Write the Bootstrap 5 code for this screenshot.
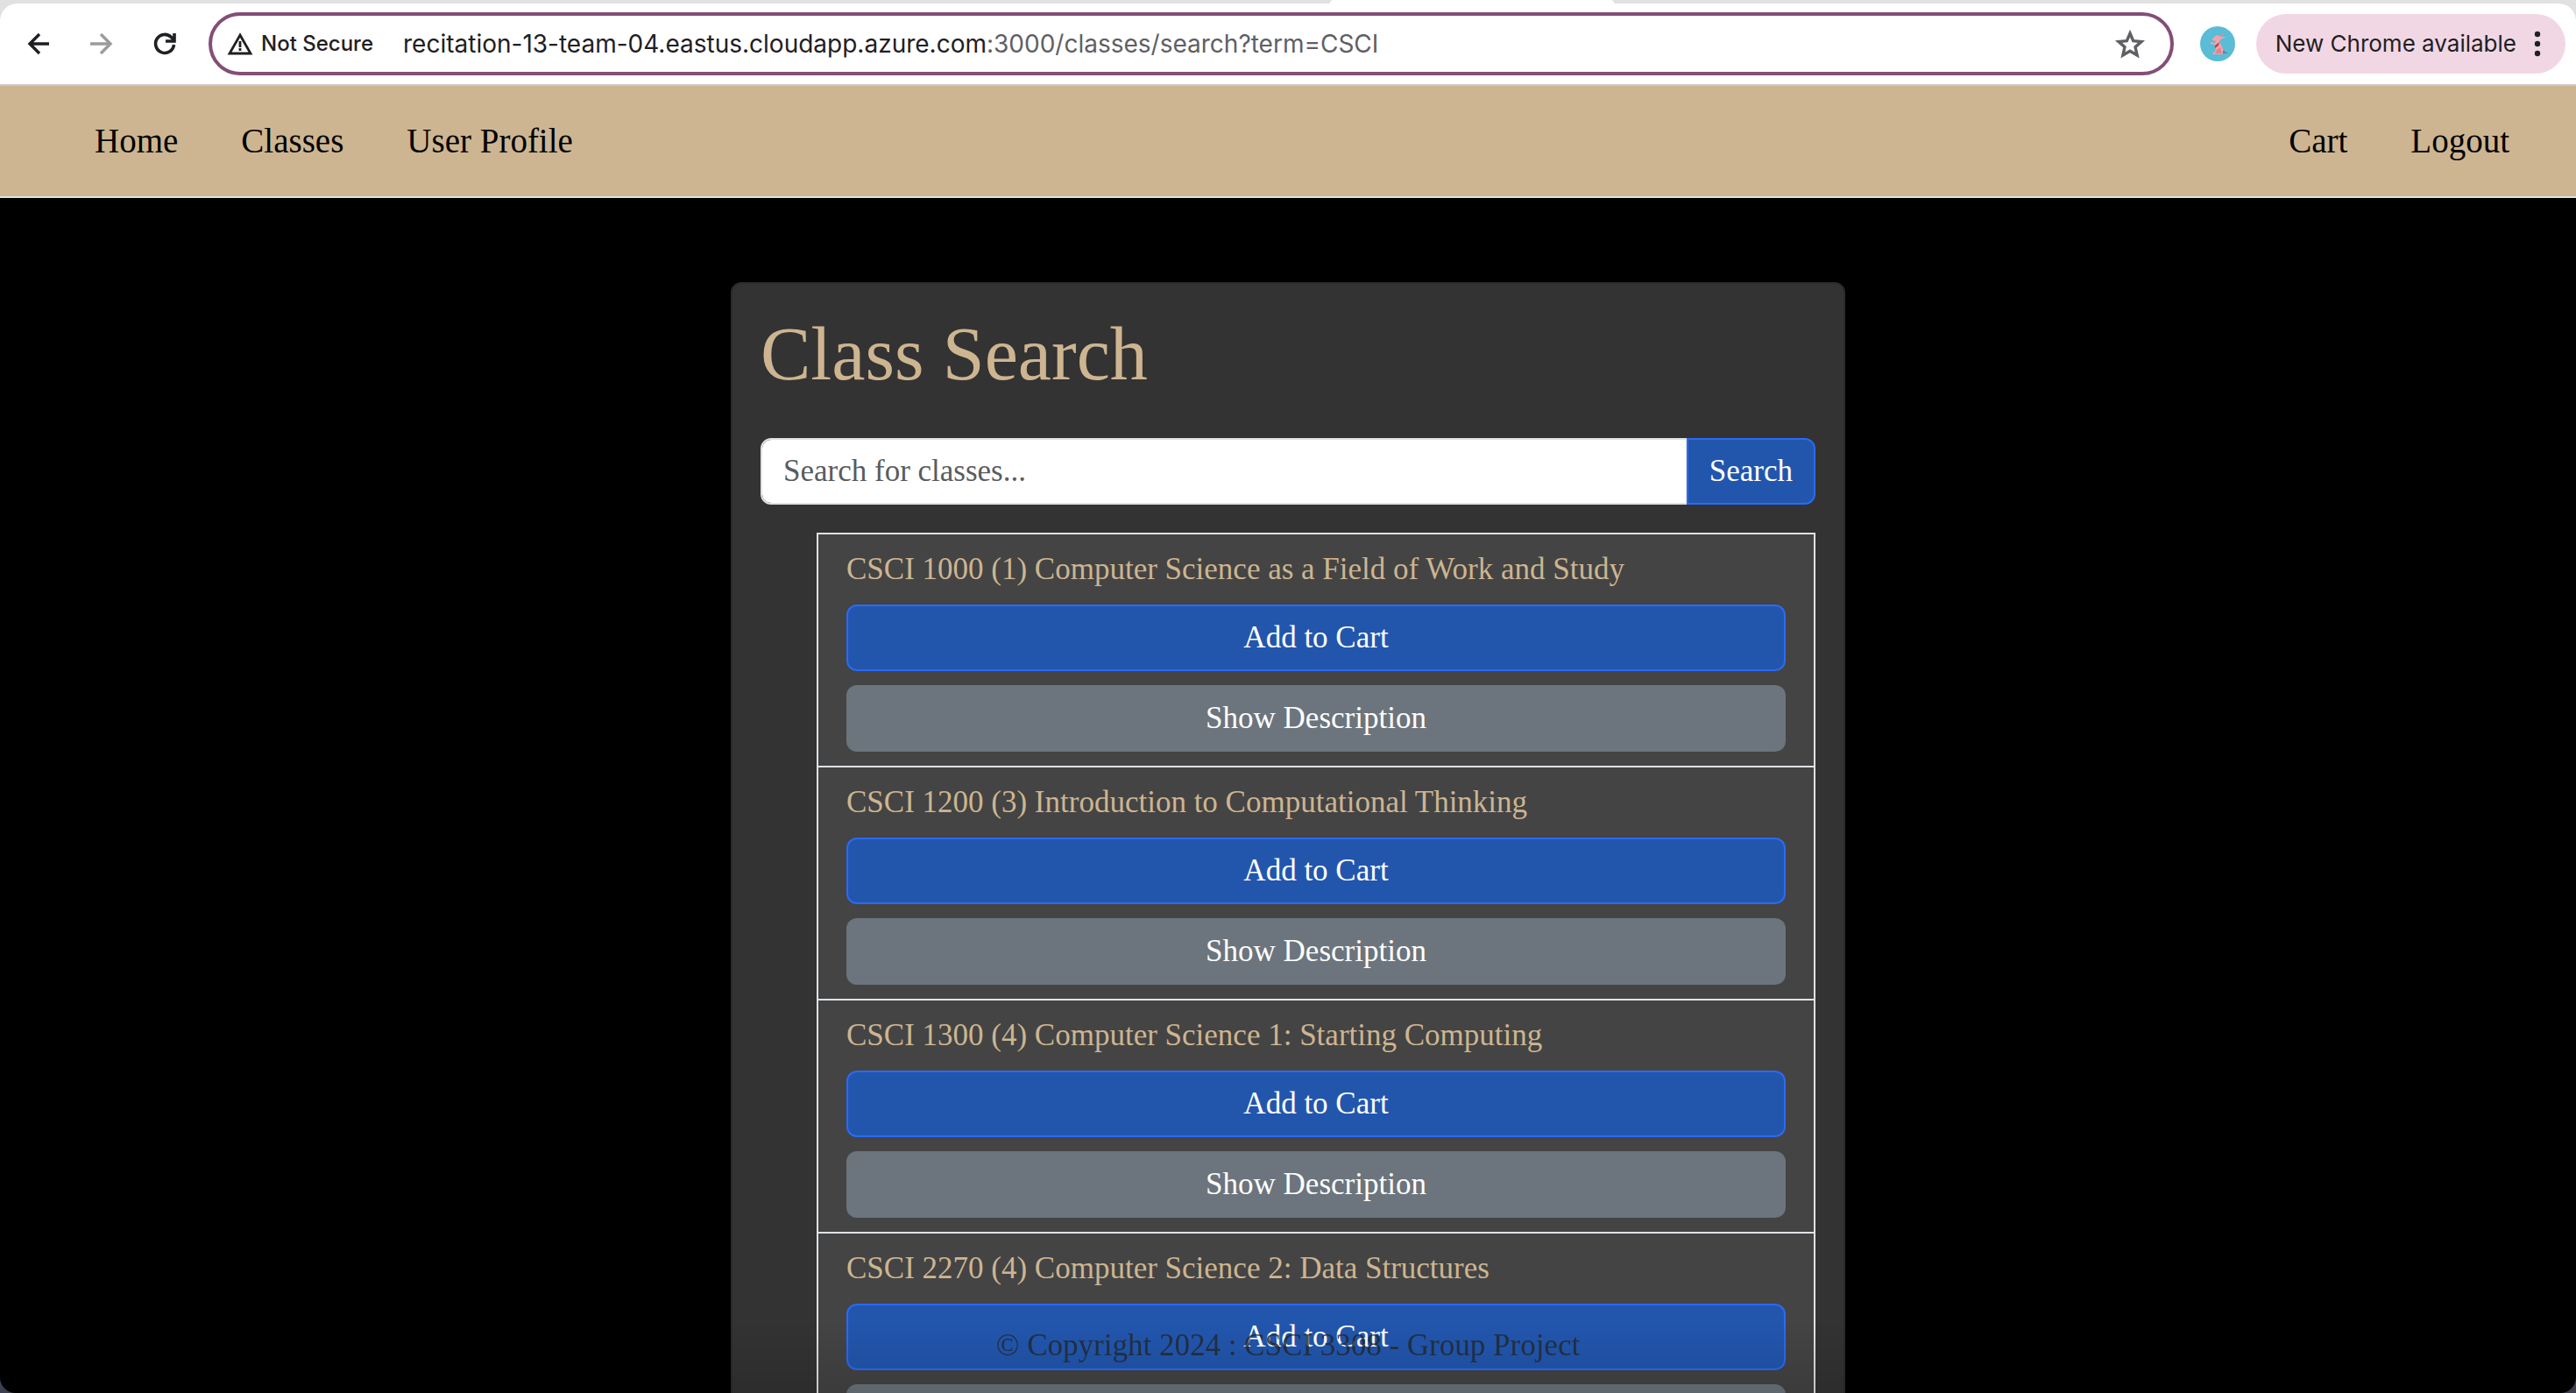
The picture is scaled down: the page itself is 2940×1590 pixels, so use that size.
<!DOCTYPE html>
<html lang="en">
<head>
<meta charset="utf-8">
<meta name="viewport" content="width=device-width, initial-scale=1">
<title>Class Search</title>
<link href="https://cdn.jsdelivr.net/npm/bootstrap@5.3.0/dist/css/bootstrap.min.css" rel="stylesheet">
<style>
html { font-size: 32px; background: #45485a; }
body { background: #000; font-family: Georgia, "Liberation Serif", serif; font-size: 35px; line-height: 48px; height: 100vh; overflow: hidden; border-radius: 0 0 18px 18px; }

/* browser toolbar */
.chrome-top { background: #e1e1e1; padding-top: 4px; font-family: Inter, sans-serif; }
.chrome-bar { background: #fff; height: 94px; border-bottom: 2px solid #c8cccf; border-radius: 20px 20px 0 0; padding: 0 12px 0 24px; position: relative; }
.tab-foot { position: absolute; left: 1518px; top: -4px; width: 324px; height: 4px; background: #fff; border-radius: 10px 10px 0 0; }
.icon-btn { border: 0; background: none; padding: 0; line-height: 0; }
.chrome-nav { gap: 32px; width: 214px; }
.omnibox { height: 72px; border: 4px solid #834e77; border-radius: 36px; padding: 0 28px 0 17px; color: #1f2023; }
.site-state { font-size: 24px; font-weight: 500; gap: 9px; margin-right: 34px; }
.site-url { font-size: 28px; }
.site-url span { color: #5f6064; }
.avatar-btn { margin: 0 24px 0 30px; }
.update-pill { height: 68px; border: 0; border-radius: 34px; background: #f1d7e4; color: #1f2023; font-size: 26px; padding: 0 28px 0 22px; gap: 20px; }

/* site navigation */
.site-nav { background: #cdb591; border-bottom: 2px solid #dee2e6; height: 128px; padding: 0 76px 0 108px; font-size: 39px; }
.site-nav .navbar-nav { gap: 72px; }
.site-nav .nav-link { color: #000; padding: 0; }

/* search card */
.search-card { width: 1272px; margin-top: 96px; background: #333; border: 2px solid #2b2b2b; border-radius: 12px; }
.search-card .card-body { padding: 32px; }
.search-title { font-size: 86px; line-height: 96px; color: #cdb591; margin-bottom: 48px; }
.form-control, .btn { font-size: 35px; line-height: 48px; height: 76px; border-width: 2px; border-radius: 12px; padding: 0 24px; font-family: inherit; }
.form-control::placeholder { color: #595c5f; }
.btn-add { --bs-btn-color: #fff; --bs-btn-bg: #2256ad; --bs-btn-border-color: #2b6af3; --bs-btn-hover-color: #fff; --bs-btn-hover-bg: #1b478f; }
.class-list { margin: 32px 0 0 64px; padding: 0; border-radius: 0; }
.class-list .list-group-item { background: #444; color: #cdb591; border: 2px solid #dee2e6; padding: 16px 32px; gap: 16px; }
.class-list .list-group-item + .list-group-item { border-top-width: 0; }

/* pinned footer, over the list */
.site-footer { height: 78px; color: rgba(33, 37, 41, .8); pointer-events: none; background: linear-gradient(rgba(0, 0, 0, 0), rgba(0, 0, 0, .12)); }
</style>
</head>
<body>
<header class="chrome-top">
  <div class="chrome-bar d-flex align-items-center">
    <div class="tab-foot"></div>
    <div class="chrome-nav d-flex align-items-center flex-shrink-0">
      <button class="icon-btn" type="button" aria-label="Back"><svg width="40" height="32" viewBox="0 0 40 32" fill="none" stroke="#1f2023" stroke-width="3.4"><path d="M32 16H11M21 5L10 16l11 11"/></svg></button>
      <button class="icon-btn" type="button" aria-label="Forward"><svg width="40" height="32" viewBox="0 0 40 32" fill="none" stroke="#9c9c9e" stroke-width="3.4"><path d="M7 16h22M19 5l11 11-11 11"/></svg></button>
      <button class="icon-btn" type="button" aria-label="Reload"><svg width="40" height="32" viewBox="0 0 40 32" fill="none" stroke="#1f2023" stroke-width="3.6"><path d="M30.500 17a10.500 10.500 0 1 1-3-8.500L31 12M31 4v9H21"/></svg></button>
    </div>
    <div class="omnibox d-flex align-items-center flex-grow-1">
      <div class="site-state d-flex align-items-center"><svg width="30" height="26" viewBox="0 0 30 26" fill="none" stroke="#1f2023" stroke-width="2.800"><path d="M15 3L27 24H3zM15 10v7M15 18v3"/></svg>Not Secure</div>
      <div class="site-url flex-grow-1">recitation-13-team-04.eastus.cloudapp.azure.com<span>:3000/classes/search?term=CSCI</span></div>
      <button class="icon-btn" type="button" aria-label="Bookmark"><svg width="36" height="34" viewBox="0 0 36 34" fill="none" stroke="#5f6064" stroke-width="3.4"><path d="M18 5l3.700 8.700 9.300.8-7 6.200 2.100 9.300L18 25.200 9.900 30l2.100-9.300-7-6.200 9.300-.8z"/></svg></button>
    </div>
    <button class="icon-btn avatar-btn" type="button" aria-label="Profile"><svg width="40" height="40" viewBox="0 0 40 40"><circle cx="20" cy="20" r="20" fill="#5abcd5"/><path d="M25 31h8l-4-2z" fill="#3c9db8"/><path d="M14 14l5-4 3 1 5-3-3 4 6 0-7 3-1 3 3 5 2 6-2 3H15l-1-2 3-1 1-5-1-3-5-1v-2l5 1 1-2-4-1z" fill="#f4a3ab"/><path d="M17 22l5-4-1 4-4 3zM26 28l2 0-1 4z" fill="#b8434b"/><path d="M22 11l5-3-3 4zM19 27l4-3 2 7-8 0z" fill="#e2848e"/></svg></button>
    <button class="update-pill d-flex align-items-center" type="button">New Chrome available<svg width="8" height="30" viewBox="0 0 8 30" fill="#1f2023"><circle cx="4" cy="4" r="3.200"/><circle cx="4" cy="15" r="3.200"/><circle cx="4" cy="26" r="3.200"/></svg></button>
  </div>
</header>

<nav class="site-nav d-flex align-items-center justify-content-between">
  <div class="navbar-nav flex-row">
    <a class="nav-link" href="#">Home</a>
    <a class="nav-link" href="#">Classes</a>
    <a class="nav-link" href="#">User Profile</a>
  </div>
  <div class="navbar-nav flex-row">
    <a class="nav-link" href="#">Cart</a>
    <a class="nav-link" href="#">Logout</a>
  </div>
</nav>

<main>
  <div class="card search-card mx-auto">
    <div class="card-body">
      <h1 class="search-title fw-normal">Class Search</h1>
      <form class="input-group">
        <input class="form-control" type="text" placeholder="Search for classes..." aria-label="Search for classes">
        <button class="btn btn-add" type="button">Search</button>
      </form>
      <ul class="list-group class-list">
        <li class="list-group-item d-flex flex-column">
          <span>CSCI 1000 (1) Computer Science as a Field of Work and Study</span>
          <button class="btn btn-add" type="button">Add to Cart</button>
          <button class="btn btn-secondary" type="button">Show Description</button>
        </li>
        <li class="list-group-item d-flex flex-column">
          <span>CSCI 1200 (3) Introduction to Computational Thinking</span>
          <button class="btn btn-add" type="button">Add to Cart</button>
          <button class="btn btn-secondary" type="button">Show Description</button>
        </li>
        <li class="list-group-item d-flex flex-column">
          <span>CSCI 1300 (4) Computer Science 1: Starting Computing</span>
          <button class="btn btn-add" type="button">Add to Cart</button>
          <button class="btn btn-secondary" type="button">Show Description</button>
        </li>
        <li class="list-group-item d-flex flex-column">
          <span>CSCI 2270 (4) Computer Science 2: Data Structures</span>
          <button class="btn btn-add" type="button">Add to Cart</button>
          <button class="btn btn-secondary" type="button" aria-label="Show Description"></button>
        </li>
      </ul>
    </div>
  </div>
</main>

<footer class="site-footer fixed-bottom text-center">© Copyright 2024 : CSCI 3308 - Group Project</footer>
<script src="https://cdn.jsdelivr.net/npm/bootstrap@5.3.0/dist/js/bootstrap.bundle.min.js"></script>
</body>
</html>
